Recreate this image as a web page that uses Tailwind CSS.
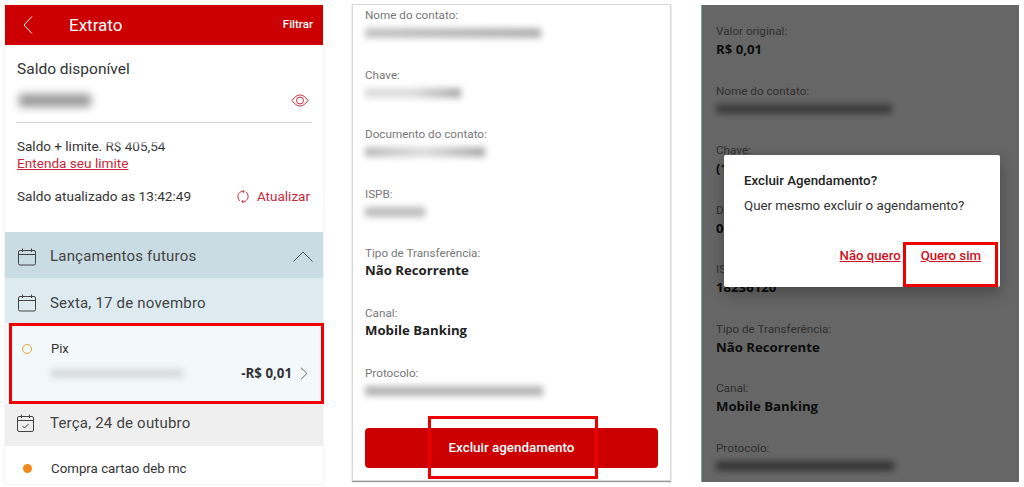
<!DOCTYPE html>
<html lang="pt-BR">
<head>
    <meta charset="UTF-8">
    <meta name="viewport" content="width=device-width, initial-scale=1.0">
    <title>Extrato</title>
    <script src="https://cdn.jsdelivr.net/npm/@tailwindcss/browser@4"></script>
</head>
<body class="bg-white w-[1024px] h-[487px] overflow-hidden font-['Roboto',sans-serif]">
    <div class="flex items-start pl-[5px] pt-[4px]">

        <!-- Extrato -->
        <div class="relative w-[318px] h-[479px] mt-[1px] bg-white shadow-[0_0_1px_#bbb] text-[#333]">
            <div class="flex items-center h-[40px] bg-[#cc0000] text-white">
                <svg class="ml-[18px] w-[10px] h-[18px]" viewBox="0 0 10 18" fill="none" stroke="#fff" stroke-width="1"><path d="M9 .5 1 9l8 8.500"/></svg>
                <span class="ml-[36px] text-[17px] leading-none">Extrato</span>
                <span class="ml-auto mr-[10px] text-[11.5px] font-medium">Filtrar</span>
            </div>
            <div class="h-[187px] px-[12px] pt-[14px]">
                <p class="text-[15.5px] leading-[20px]">Saldo disponível</p>
                <div class="flex items-center justify-between mt-[15px] pr-[2px]">
                    <div class="w-[72px] h-[13px] ml-[2px] bg-[#999] blur-[4px]"></div>
                    <svg class="w-[18px] h-[13px]" viewBox="0 0 18 13" fill="none" stroke="#c9283a" stroke-width="1"><path d="M1 6.500C4 2.500 6.500 1 9 1s5 1.500 8 5.500C14 10.500 11.500 12 9 12S4 10.500 1 6.500Z"/><circle cx="9" cy="6.500" r="3.500"/></svg>
                </div>
                <div class="h-px bg-[#d2d2d2] mt-[15px] w-[294px]"></div>
                <p class="mt-[14px] text-[13.500px] leading-[18px]">Saldo + limite. R$ 405,54</p>
                <a class="block text-[13.600px] leading-[17px] text-[#c9283a] underline">Entenda seu limite</a>
                <div class="flex items-center mt-[15px] text-[13.600px] leading-[18px]">
                    <span>Saldo atualizado as 13:42:49</span>
                    <svg class="ml-auto mr-[8px] w-[12px] h-[13px]" viewBox="0 0 12 13" fill="none" stroke="#c9283a" stroke-width="1"><path d="M3 11C.5 9 .2 5 2.500 2.700 4 1.300 5.500 1 7 1.300M5.500 0 7.200 1.400 5.700 3M9 2c2.500 2 2.800 6 .5 8.300C8 11.700 6.500 12 5 11.700M6.500 13 4.800 11.600 6.300 10"/></svg>
                    <span class="mr-[1px] text-[13.500px] text-[#c9283a]">Atualizar</span>
                </div>
            </div>
            <div class="flex items-center h-[46px] bg-[#c9dbe3] pl-[13px] pr-[10px] pt-[3px]">
                <svg class="w-[18px] h-[18px]" viewBox="0 0 18 18" fill="none" stroke="#444" stroke-width="1"><rect x=".5" y="2.500" width="17" height="14.500" rx="1.500"/><path d="M.5 6.500h17M4.500 .5v3.500M13.500 .5v3.500"/></svg>
                <span class="ml-[14px] text-[15px] tracking-[.2px] text-[#444]">Lançamentos futuros</span>
                <svg class="ml-auto w-[20px] h-[11px]" viewBox="0 0 20 11" fill="none" stroke="#555" stroke-width="1"><path d="M.5 10.500 10 1l9.500 9.500"/></svg>
            </div>
            <div class="flex items-center h-[45px] bg-[#ddebf0] pl-[13px] pt-[5px]">
                <svg class="w-[18px] h-[18px]" viewBox="0 0 18 18" fill="none" stroke="#444" stroke-width="1"><rect x=".5" y="2.500" width="17" height="14.500" rx="1.500"/><path d="M.5 6.500h17M4.500 .5v3.500M13.500 .5v3.500"/></svg>
                <span class="ml-[14px] text-[15px] tracking-[.2px] text-[#444]">Sexta, 17 de novembro</span>
            </div>
            <div class="h-[81px] bg-[#f3f8fa] pl-[17px] pr-[15px]">
                <div class="flex items-center pt-[18px]">
                    <div class="w-[10px] h-[10px] rounded-full border border-[#e0a93a]"></div>
                    <span class="ml-[19px] text-[13px] leading-[16px]">Pix</span>
                </div>
                <div class="flex items-center mt-[7px] pl-[29px]">
                    <div class="w-[132px] h-[9px] bg-[#d6d9db] blur-[3px]"></div>
                    <span class="ml-auto text-[13.300px] font-bold font-['Open_Sans',sans-serif] text-[#333]">-R$ 0,01</span>
                    <svg class="ml-[8px] w-[8px] h-[13px]" viewBox="0 0 8 13" fill="none" stroke="#666" stroke-width="1"><path d="M1 .8 7 6.500 1 12.200"/></svg>
                </div>
            </div>
            <div class="flex items-center h-[42px] bg-[#efefef] pl-[12px] pb-[3px]">
                <svg class="w-[18px] h-[19px]" viewBox="0 0 18 19" fill="none" stroke="#444" stroke-width="1"><rect x=".5" y="2.500" width="16" height="15" rx="1.500"/><path d="M.5 6.500h16M4.500 .5v3.500M12.500 .5v3.500M5.500 12l2 2 4-4"/></svg>
                <span class="ml-[15px] text-[15px] tracking-[.2px] text-[#444]">Terça, 24 de outubro</span>
            </div>
            <div class="flex items-center h-[37px] pl-[18px] pt-[8px]">
                <div class="w-[9px] h-[9px] rounded-full bg-[#f08a1c]"></div>
                <span class="ml-[19px] text-[13.300px]">Compra cartao deb mc</span>
            </div>
            <!-- smear left over the amount in the source image -->
            <div class="absolute left-[95px] top-[132px] w-[85px] h-[6px] bg-white blur-[2px]"></div>
            <div class="absolute left-[4px] top-[318px] w-[315px] h-[81px] border-[3px] border-[#ee0000]"></div>
        </div>

        <!-- Detalhes -->
        <div class="relative flex flex-col w-[319px] h-[477px] ml-[29px] bg-white border border-[#d8d8d8] shadow-[0_1px_1px_#999] px-[12px] pt-[1px]">
            <div class="h-[59.600px]">
                <p class="text-[11.700px] leading-[18px] text-[#777]">Nome do contato:</p>
                <div class="w-[176px] h-[10px] mt-[4px] bg-linear-to-r from-[#c4c4c4] to-[#b0b0b0] blur-[3px]"></div>
            </div>
            <div class="h-[59.600px]">
                <p class="text-[11.700px] leading-[18px] text-[#777]">Chave:</p>
                <div class="w-[96px] h-[10px] mt-[4px] bg-linear-to-r from-[#ddd] via-[#ddd] to-[#aaa] blur-[3px]"></div>
            </div>
            <div class="h-[59.600px]">
                <p class="text-[11.700px] leading-[18px] text-[#777]">Documento do contato:</p>
                <div class="w-[120px] h-[10px] mt-[4px] bg-linear-to-r from-[#bbb] via-[#ddd] to-[#aaa] blur-[3px]"></div>
            </div>
            <div class="h-[59.600px]">
                <p class="text-[11.700px] leading-[18px] text-[#777]">ISPB:</p>
                <div class="w-[60px] h-[10px] mt-[4px] bg-[#bdbdbd] blur-[3px]"></div>
            </div>
            <div class="h-[59.600px]">
                <p class="text-[11.700px] leading-[18px] text-[#777]">Tipo de Transferência:</p>
                <p class="text-[13.200px] leading-[16px] font-bold font-['Open_Sans',sans-serif] text-[#222]">Não Recorrente</p>
            </div>
            <div class="h-[59.600px]">
                <p class="text-[11.700px] leading-[18px] text-[#777]">Canal:</p>
                <p class="text-[13.200px] leading-[16px] font-bold font-['Open_Sans',sans-serif] text-[#222]">Mobile Banking</p>
            </div>
            <div class="h-[64px]">
                <p class="text-[11.700px] leading-[18px] text-[#777]">Protocolo:</p>
                <div class="w-[178px] h-[10px] mt-[4px] bg-[#b5b5b5] blur-[3px]"></div>
            </div>
            <div class="flex items-center justify-center h-[40px] rounded-[4px] bg-[#cc0000] text-white text-[13.400px] font-medium">Excluir agendamento</div>
            <div class="absolute left-[75px] top-[411px] w-[170px] h-[63px] border-[3px] border-[#ee0000]"></div>
        </div>

        <!-- Confirmação -->
        <div class="relative w-[318px] h-[477px] ml-[30px] mt-[1px] bg-white px-[14px] pt-[18px] border-l border-[#7fa8a8]">
            <div class="h-[59.500px]">
                <p class="text-[11.700px] leading-[17px] text-[#777]">Valor original:</p>
                <p class="text-[13.200px] leading-[18px] font-bold font-['Open_Sans',sans-serif] text-[#222]">R$ 0,01</p>
            </div>
            <div class="h-[59.500px]">
                <p class="text-[11.700px] leading-[17px] text-[#777]">Nome do contato:</p>
                <div class="w-[176px] h-[10px] mt-[4px] bg-[#999] blur-[3px]"></div>
            </div>
            <div class="h-[59.500px]">
                <p class="text-[11.700px] leading-[17px] text-[#777]">Chave:</p>
                <p class="text-[13.200px] leading-[18px] font-bold font-['Open_Sans',sans-serif] text-[#222]">(11) 91234-5678</p>
            </div>
            <div class="h-[59.500px]">
                <p class="text-[11.700px] leading-[17px] text-[#777]">Documento do contato:</p>
                <p class="text-[13.200px] leading-[18px] font-bold font-['Open_Sans',sans-serif] text-[#222]">000.000.000-00</p>
            </div>
            <div class="h-[59.500px]">
                <p class="text-[11.700px] leading-[17px] text-[#777]">ISPB:</p>
                <p class="text-[13.200px] leading-[18px] font-bold font-['Open_Sans',sans-serif] text-[#222]">18236120</p>
            </div>
            <div class="h-[59.500px]">
                <p class="text-[11.700px] leading-[17px] text-[#777]">Tipo de Transferência:</p>
                <p class="text-[13.200px] leading-[18px] font-bold font-['Open_Sans',sans-serif] text-[#222]">Não Recorrente</p>
            </div>
            <div class="h-[59.500px]">
                <p class="text-[11.700px] leading-[17px] text-[#777]">Canal:</p>
                <p class="text-[13.200px] leading-[18px] font-bold font-['Open_Sans',sans-serif] text-[#222]">Mobile Banking</p>
            </div>
            <div>
                <p class="text-[11.700px] leading-[17px] text-[#777]">Protocolo:</p>
                <div class="w-[178px] h-[10px] mt-[4px] bg-[#888] blur-[3px]"></div>
            </div>

            <!-- backdrop + modal -->
            <div class="absolute inset-0 bg-black/60"></div>
            <div class="absolute left-[22px] top-[150px] w-[276px] h-[132px] bg-white rounded-[2px] shadow-[0_6px_16px_rgba(0,0,0,.3)] px-[20px] pt-[16px]">
                <p class="text-[13.300px] leading-[20px] font-medium text-[#222]">Excluir Agendamento?</p>
                <p class="mt-[5px] text-[13.300px] leading-[20px] text-[#333]">Quer mesmo excluir o agendamento?</p>
                <div class="flex justify-end gap-[20px] mt-[31px] -mr-px text-[13.200px] leading-[18px] font-medium text-[#cc1122] underline">
                    <span>Não quero</span>
                    <span>Quero sim</span>
                </div>
            </div>
            <div class="absolute left-[201px] top-[237px] w-[95px] h-[45px] border-[3px] border-[#ee0000]"></div>
        </div>
    </div>
</body>
</html>
